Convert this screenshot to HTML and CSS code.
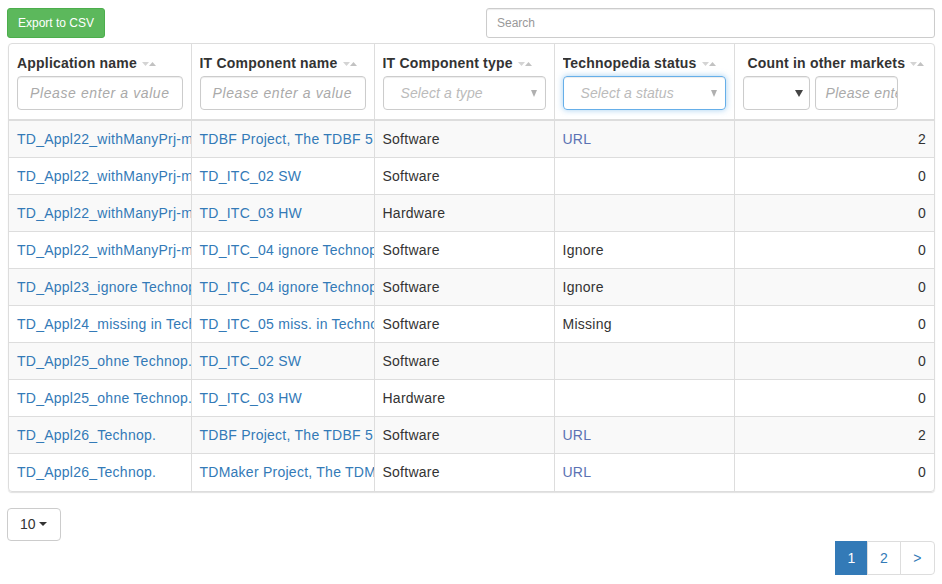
FILE: index.html
```html
<!DOCTYPE html>
<html>
<head>
<meta charset="utf-8">
<link rel="stylesheet" href="styles.css">
</head>
<body>
<div class="page">
  <div class="toolbar">
    <button class="btn-export">Export to CSV</button>
    <div class="search"><span class="ph">Search</span></div>
  </div>
  <div class="table-wrap">
    <table class="grid">
      <colgroup>
        <col class="c1"><col class="c2"><col class="c3"><col class="c4"><col class="c5">
      </colgroup>
      <thead>
        <tr>
          <th><div class="th-title">Application name <span class="sort"><svg width="14" height="6" viewBox="0 0 14 6"><path d="M0 1h7L3.5 5z" fill="#d4d4d4"/><path d="M7 5h7L10.5 1z" fill="#c2c2c2"/></svg></span></div><div class="field"><span class="ph">Please enter a value</span></div></th>
          <th><div class="th-title">IT Component name <span class="sort"><svg width="14" height="6" viewBox="0 0 14 6"><path d="M0 1h7L3.5 5z" fill="#d4d4d4"/><path d="M7 5h7L10.5 1z" fill="#c2c2c2"/></svg></span></div><div class="field"><span class="ph">Please enter a value</span></div></th>
          <th><div class="th-title">IT Component type <span class="sort"><svg width="14" height="6" viewBox="0 0 14 6"><path d="M0 1h7L3.5 5z" fill="#d4d4d4"/><path d="M7 5h7L10.5 1z" fill="#c2c2c2"/></svg></span></div><div class="field select"><span class="ph sel-ph">Select a type</span><span class="caret light"></span></div></th>
          <th><div class="th-title">Technopedia status <span class="sort"><svg width="14" height="6" viewBox="0 0 14 6"><path d="M0 1h7L3.5 5z" fill="#d4d4d4"/><path d="M7 5h7L10.5 1z" fill="#c2c2c2"/></svg></span></div><div class="field select focus"><span class="ph sel-ph">Select a status</span><span class="caret light"></span></div></th>
          <th class="num-th"><div class="th-title">Count in other markets <span class="sort"><svg width="14" height="6" viewBox="0 0 14 6"><path d="M0 1h7L3.5 5z" fill="#d4d4d4"/><path d="M7 5h7L10.5 1z" fill="#c2c2c2"/></svg></span></div><div class="count-filter"><div class="field op"><span class="caret dark"></span></div><div class="field val"><span class="ph">Please ente</span></div></div></th>
        </tr>
      </thead>
      <tbody>
        <tr><td class="lnk">TD_Appl22_withManyPrj-multipleITCs</td><td class="lnk">TDBF Project, The TDBF 5.0</td><td>Software</td><td class="url">URL</td><td class="num">2</td></tr>
        <tr><td class="lnk">TD_Appl22_withManyPrj-multipleITCs</td><td class="lnk">TD_ITC_02 SW</td><td>Software</td><td></td><td class="num">0</td></tr>
        <tr><td class="lnk">TD_Appl22_withManyPrj-multipleITCs</td><td class="lnk">TD_ITC_03 HW</td><td>Hardware</td><td></td><td class="num">0</td></tr>
        <tr><td class="lnk">TD_Appl22_withManyPrj-multipleITCs</td><td class="lnk">TD_ITC_04 ignore Technopedia</td><td>Software</td><td>Ignore</td><td class="num">0</td></tr>
        <tr><td class="lnk">TD_Appl23_ignore Technopedia</td><td class="lnk">TD_ITC_04 ignore Technopedia</td><td>Software</td><td>Ignore</td><td class="num">0</td></tr>
        <tr><td class="lnk">TD_Appl24_missing in Technopedia</td><td class="lnk">TD_ITC_05 miss. in Technopedia</td><td>Software</td><td>Missing</td><td class="num">0</td></tr>
        <tr><td class="lnk">TD_Appl25_ohne Technop.</td><td class="lnk">TD_ITC_02 SW</td><td>Software</td><td></td><td class="num">0</td></tr>
        <tr><td class="lnk">TD_Appl25_ohne Technop.</td><td class="lnk">TD_ITC_03 HW</td><td>Hardware</td><td></td><td class="num">0</td></tr>
        <tr><td class="lnk">TD_Appl26_Technop.</td><td class="lnk">TDBF Project, The TDBF 5.0</td><td>Software</td><td class="url">URL</td><td class="num">2</td></tr>
        <tr><td class="lnk">TD_Appl26_Technop.</td><td class="lnk">TDMaker Project, The TDMaker 2.0</td><td>Software</td><td class="url">URL</td><td class="num">0</td></tr>
      </tbody>
    </table>
  </div>
  <div class="footer">
    <button class="page-size">10 <span class="caret-sm"></span></button>
    <ul class="pagination">
      <li class="active">1</li>
      <li>2</li>
      <li class="last">&gt;</li>
    </ul>
  </div>
</div>
</body>
</html>
```

FILE: styles.css
```css
* { box-sizing: border-box; }
html, body { margin: 0; padding: 0; background: #fff; }
body {
  font-family: "Liberation Sans", Arial, sans-serif;
  font-size: 14px;
  line-height: 20px;
  color: #333;
  letter-spacing: 0.25px;
}
.page { padding: 8px 7px 0 7px; }

.toolbar {
  display: flex;
  justify-content: space-between;
  align-items: center;
  height: 30px;
}
.btn-export {
  height: 30px;
  width: 98px;
  padding: 0 10px;
  white-space: nowrap;
  font-family: "Liberation Sans", Arial, sans-serif;
  font-size: 12px;
  letter-spacing: 0;
  color: #fff;
  background: #5cb85c;
  border: 1px solid #4cae4c;
  border-radius: 3px;
  text-align: left;
}
.search {
  width: 449px;
  height: 30px;
  border: 1px solid #ccc;
  border-radius: 3px;
  padding: 0 10px;
  font-size: 12px;
  letter-spacing: 0;
  line-height: 28px;
  box-shadow: inset 0 1px 1px rgba(0,0,0,.075);
}
.ph { color: #999; }

.table-wrap {
  margin: 5px 0 0 1px;
  border: 1px solid #ddd;
  border-radius: 4px;
  overflow: hidden;
  box-shadow: 0 1px 1px rgba(0,0,0,.12);
}
.grid {
  width: 100%;
  border-collapse: collapse;
  table-layout: fixed;
}
col.c1 { width: 182px; }
col.c2 { width: 183px; }
col.c3 { width: 180px; }
col.c4 { width: 180px; }

th {
  text-align: left;
  vertical-align: top;
  font-weight: bold;
  letter-spacing: 0.2px;
  padding: 9px 8px 9px 8px;
  border-left: 1px solid #ddd;
  border-bottom: 2px solid #ddd;
}
th:first-child, td:first-child { border-left: 0; }
.th-title {
  height: 20px;
  margin-bottom: 3px;
  white-space: nowrap;
  overflow: hidden;
}
.num-th .th-title { padding-left: 5px; }
.sort { display: inline-block; width: 16px; padding-left: 1px; vertical-align: 1px; }
.sort svg { display: block; }

.field {
  position: relative;
  height: 34px;
  border: 1px solid #ccc;
  border-radius: 4px;
  padding: 0 12px;
  line-height: 32px;
  font-weight: normal;
  font-style: italic;
  letter-spacing: 0.6px;
  white-space: nowrap;
  overflow: hidden;
  box-shadow: inset 0 1px 1px rgba(0,0,0,.075);
}
.field .ph { color: #aaa; }
.select { letter-spacing: 0.1px; }
.select .sel-ph { padding-left: 5px; color: #bbb; }
.focus {
  border-color: #66afe9;
  box-shadow: inset 0 1px 1px rgba(0,0,0,.075), 0 0 6px rgba(102,175,233,.6);
}
.caret {
  position: absolute;
  right: 8px;
  top: 13px;
  width: 0; height: 0;
  border-left: 3.5px solid transparent;
  border-right: 3.5px solid transparent;
  border-top: 7px solid #b0b0b0;
}
.caret.dark { border-top-color: #444; right: 6px; border-left-width: 4px; border-right-width: 4px; }
.count-filter { display: flex; gap: 5px; }
.field.op { width: 67px; }
.field.val { width: 83px; padding: 0 10px; letter-spacing: 0.3px; }

td {
  padding: 8px;
  border-left: 1px solid #ddd;
  border-top: 1px solid #ddd;
  white-space: nowrap;
  overflow: hidden;
  height: 37px;
}
tbody tr:first-child td { border-top: 0; }
tbody tr:nth-child(odd) { background: #f9f9f9; }
td.lnk { color: #337ab7; }
td.url { color: #5b72b3; }
td.num { text-align: right; padding-right: 8px; }

.footer {
  display: flex;
  flex-direction: column;
  align-items: flex-start;
  margin-top: 16px;
}
.page-size {
  height: 33px;
  width: 54px;
  padding: 0 12px;
  white-space: nowrap;
  background: #fff;
  border: 1px solid #ccc;
  border-radius: 4px;
  font-family: "Liberation Sans", Arial, sans-serif;
  font-size: 14px;
  color: #333;
  text-align: left;
}
.caret-sm {
  display: inline-block;
  width: 0; height: 0;
  margin-left: 0;
  vertical-align: 3px;
  border-left: 4px solid transparent;
  border-right: 4px solid transparent;
  border-top: 4px solid #333;
}
.pagination {
  align-self: flex-end;
  display: flex;
  list-style: none;
  margin: 0;
  padding: 0;
}
.pagination li {
  width: 34px;
  height: 34px;
  line-height: 32px;
  text-align: center;
  color: #337ab7;
  border: 1px solid #ddd;
  margin-left: -1px;
  background: #fff;
}
.pagination li.active {
  width: 33px;
  background: #337ab7;
  border-color: #337ab7;
  color: #fff;
  margin-left: 0;
}
.pagination li.last {
  width: 35px;
  border-radius: 0 4px 4px 0;
}
```
